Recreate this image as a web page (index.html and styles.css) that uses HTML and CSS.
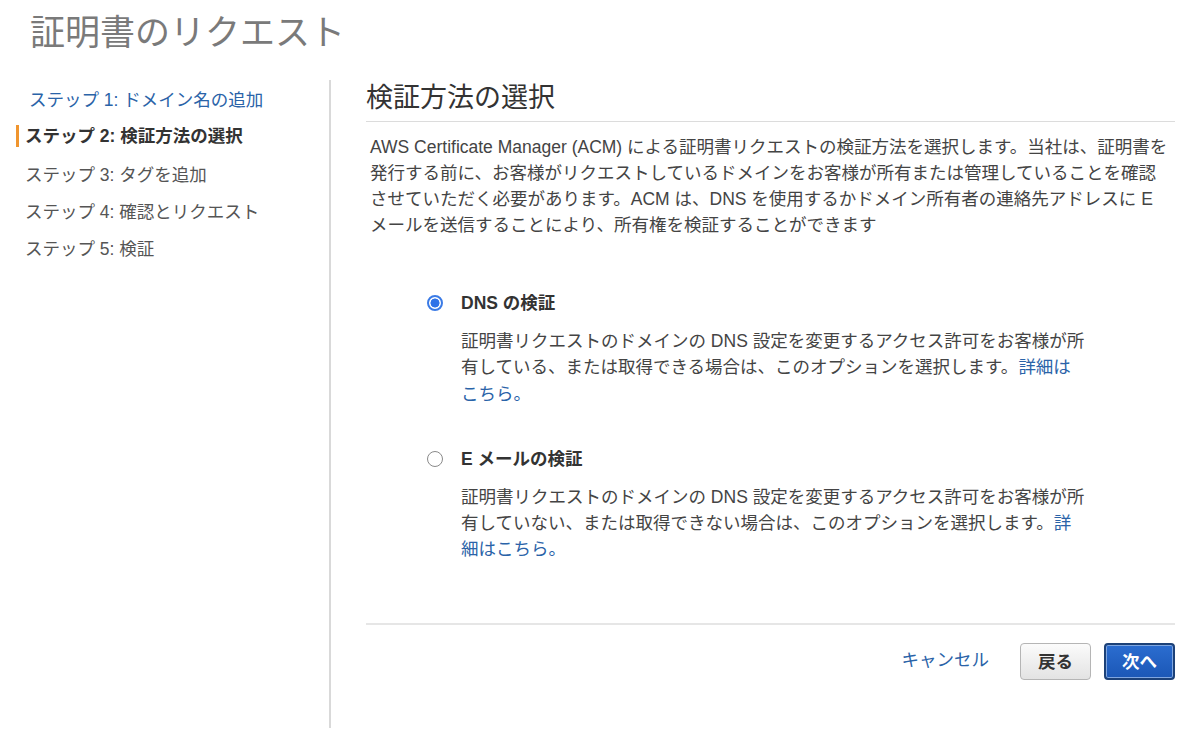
FILE: index.html
```html
<!DOCTYPE html>
<html lang="ja">
<head>
<meta charset="utf-8">
<title>証明書のリクエスト</title>
<link rel="stylesheet" href="styles.css">
</head>
<body>
<header class="page-header">
  <h1 class="page-title">証明書のリクエスト</h1>
</header>
<div class="layout">
  <nav class="steps">
    <a class="step step-link" href="#">ステップ 1: ドメイン名の追加</a>
    <div class="step step-active"><span class="step-marker">ステップ 2: 検証方法の選択</span></div>
    <div class="step">ステップ 3: タグを追加</div>
    <div class="step">ステップ 4: 確認とリクエスト</div>
    <div class="step">ステップ 5: 検証</div>
  </nav>
  <main class="content">
    <h2 class="section-title">検証方法の選択</h2>
    <p class="intro">AWS Certificate Manager (ACM) による証明書リクエストの検証方法を選択します。当社は、証明書を<br>発行する前に、お客様がリクエストしているドメインをお客様が所有または管理していることを確認<br>させていただく必要があります。ACM は、DNS を使用するかドメイン所有者の連絡先アドレスに E<br>メールを送信することにより、所有権を検証することができます</p>
    <div class="options">
      <div class="option">
        <div class="option-head">
          <span class="radio radio-checked"></span>
          <span class="option-label">DNS の検証</span>
        </div>
        <p class="option-desc">証明書リクエストのドメインの DNS 設定を変更するアクセス許可をお客様が所有している、または取得できる場合は、このオプションを選択します。<a href="#" class="link">詳細はこちら。</a></p>
      </div>
      <div class="option option-second">
        <div class="option-head">
          <span class="radio"></span>
          <span class="option-label">E メールの検証</span>
        </div>
        <p class="option-desc">証明書リクエストのドメインの DNS 設定を変更するアクセス許可をお客様が所有していない、または取得できない場合は、このオプションを選択します。<a href="#" class="link">詳細はこちら。</a></p>
      </div>
    </div>
    <div class="actions">
      <a href="#" class="link cancel">キャンセル</a>
      <button class="btn btn-secondary">戻る</button>
      <button class="btn btn-primary">次へ</button>
    </div>
  </main>
</div>
</body>
</html>
```

FILE: styles.css
```css
* { box-sizing: border-box; }
html, body { margin: 0; padding: 0; background: #fff; }
body {
  font-family: "Liberation Sans", "Noto Sans CJK JP", sans-serif;
  font-size: 17.5px;
  color: #444;
  width: 1200px;
  height: 751px;
  overflow: hidden;
}
.page-header { padding: 10px 0 0 30px; height: 80px; }
.page-title {
  margin: 0;
  font-size: 35px;
  line-height: 46px;
  font-weight: 400;
  color: #7a7a7a;
}
.layout { display: flex; height: 648px; }
.steps {
  width: 331px;
  flex: none;
  border-right: 2px solid #d9d9d9;
  padding-left: 16px;
}
.step {
  display: flex;
  align-items: center;
  height: 37.3px;
  padding-left: 9px;
  color: #555;
  text-decoration: none;
}
.step-link { color: #2a63a8; padding-left: 13px; }
.step-active { padding-left: 0; font-weight: 700; color: #333; }
.step-marker {
  border-left: 3px solid #f0952e;
  padding-left: 6px;
  line-height: 22px;
}
.content {
  flex: 1;
  margin-left: 35px;
  margin-right: 25px;
  display: flex;
  flex-direction: column;
}
.section-title {
  margin: 0;
  font-size: 27px;
  line-height: 36px;
  font-weight: 400;
  color: #333;
  padding-bottom: 5px;
  border-bottom: 1px solid #dcdcdc;
}
.intro {
  margin: 12px 0 0;
  padding: 0 0 0 4px;
  line-height: 26px;
  white-space: nowrap;
}
.options { margin: 52px 0 0 61px; }
.option-second { margin-top: 39px; }
.option-head { display: flex; align-items: center; gap: 18px; line-height: 26px; }
.option-label { font-weight: 700; color: #333; }
.radio {
  width: 16px;
  height: 16px;
  border-radius: 50%;
  border: 1.5px solid #8a8a8a;
  background: #fff;
  display: inline-block;
  flex: none;
}
.radio-checked {
  border: 2px solid #3b7be6;
  background: radial-gradient(circle, #2f73e8 0 4.2px, #fff 4.8px);
}
.option-desc {
  margin: 12px 0 0 34px;
  width: 626px;
  line-height: 26.3px;
}
.link { color: #2a63a8; text-decoration: none; }
.actions {
  margin-top: 60px;
  border-top: 2px solid #e6e6e6;
  padding-top: 18px;
  display: flex;
  justify-content: flex-end;
  align-items: center;
}
.cancel { margin-right: 31px; margin-top: -6px; }
.btn {
  font-family: inherit;
  font-size: 17.5px;
  font-weight: 700;
  width: 71px;
  height: 37px;
  border-radius: 4px;
  padding: 0 0 2px;
  cursor: pointer;
}
.btn-secondary {
  background: linear-gradient(#fbfbfb, #e3e3e3);
  border: 1px solid #b5b5b5;
  color: #333;
  margin-right: 13px;
}
.btn-primary {
  background: linear-gradient(#2b6dd0, #1b57b6);
  border: 2px solid #1c4178;
  box-shadow: inset 0 0 0 1px #7fa6e0;
  color: #fff;
}
```
